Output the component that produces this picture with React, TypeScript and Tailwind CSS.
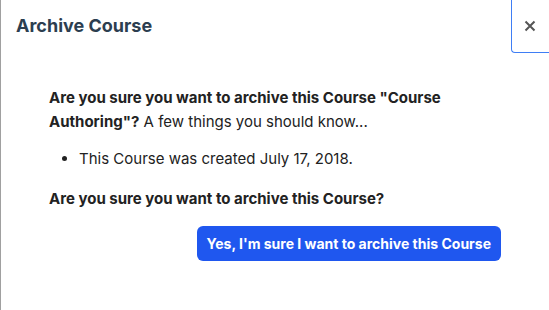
export default function App() {
  return (
    <div className="w-[549px] h-[310px] overflow-hidden bg-white border-l border-[#a0a0a0] font-['Inter',sans-serif] text-[#222]">
      <div className="flex h-[52px] items-start justify-between">
        <h2 className="pl-[15px] pt-[14px] text-[18px] font-bold leading-6 text-[#2c3e50]">
          Archive Course
        </h2>
        <button
          type="button"
          className="-mr-[2px] flex h-[53px] w-[40px] items-center justify-center rounded-bl-[4px] border-b border-l border-[#3f7ef5]"
        >
          <svg width="12" height="12" viewBox="0 0 12 12" className="-ml-[3px]">
            <path d="M1.5 1.5 L10.5 10.5 M10.5 1.5 L1.5 10.5" stroke="#555" strokeWidth="2" strokeLinecap="butt" />
          </svg>
        </button>
      </div>

      <div className="px-12 pt-[34px] text-[15px] leading-6">
        <p>
          <b className="font-bold">Are you sure you want to archive this Course "Course Authoring"?</b> A few
          things you should know...
        </p>
        <ul className="mt-[13px] list-disc pl-[30px]">
          <li>This Course was created July 17, 2018.</li>
        </ul>
        <p className="mt-[16px] font-bold">Are you sure you want to archive this Course?</p>
        <div className="mt-[15px] flex justify-end">
          <button
            type="button"
            className="h-[35px] rounded-[6px] bg-[#1f57ef] px-[10px] text-[14px] font-bold text-white"
          >
            Yes, I'm sure I want to archive this Course
          </button>
        </div>
      </div>
    </div>
  );
}
